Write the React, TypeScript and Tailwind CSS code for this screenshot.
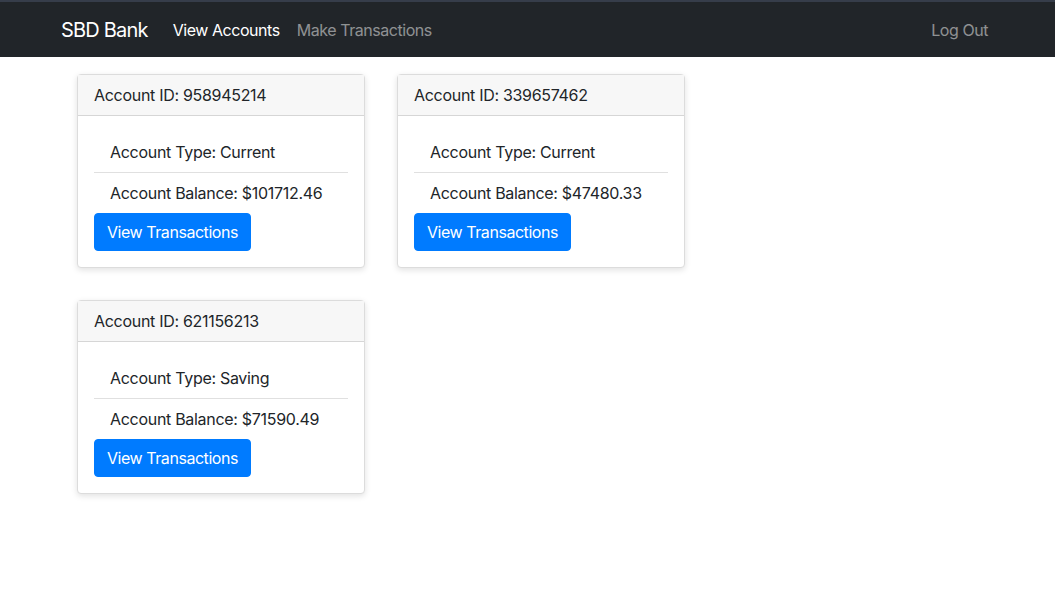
import React from "react";

const accounts = [
  { id: "958945214", type: "Current", balance: "101712.46" },
  { id: "339657462", type: "Current", balance: "47480.33" },
  { id: "621156213", type: "Saving", balance: "71590.49" },
];

const AccountCard = ({ account }: { account: (typeof accounts)[number] }) => (
  <div className="w-[288px] rounded border border-[#dcdcdc] bg-white shadow-[0_2px_6px_rgba(0,0,0,0.12)]">
    <div className="border-b border-[#d6d6d6] bg-[#f7f7f7] px-4 py-2 leading-6">
      Account ID: {account.id}
    </div>
    <div className="p-4">
      <div className="px-4 py-2 leading-6 border-b border-[#e0e0e0]">
        Account Type: {account.type}
      </div>
      <div className="px-4 py-2 leading-6">
        Account Balance: ${account.balance}
      </div>
      <button className="rounded border border-[#007bff] bg-[#007bff] px-3 py-1.5 leading-6 tracking-[-0.45px] text-white">
        View Transactions
      </button>
    </div>
  </div>
);

export default function App() {
  return (
    <div className="min-h-[612px] bg-white text-[16px] tracking-[-0.3px] text-[#212529] font-['Inter','Liberation_Sans',sans-serif]">
      <nav className="h-[57px] border-t-2 border-[#363d4a] bg-[#212529] flex items-center px-[61px] tracking-[-0.45px]">
        <span className="text-[20px] tracking-[-0.8px] text-white mr-[25px]">SBD Bank</span>
        <span className="text-white mr-[17px]">View Accounts</span>
        <span className="text-white/50">Make Transactions</span>
        <span className="ml-auto mr-[6px] text-white/50">Log Out</span>
      </nav>
      <div className="flex flex-wrap gap-8 pl-[77px] pt-[17px] w-[740px]">
        {accounts.map((account) => (
          <AccountCard key={account.id} account={account} />
        ))}
      </div>
    </div>
  );
}
